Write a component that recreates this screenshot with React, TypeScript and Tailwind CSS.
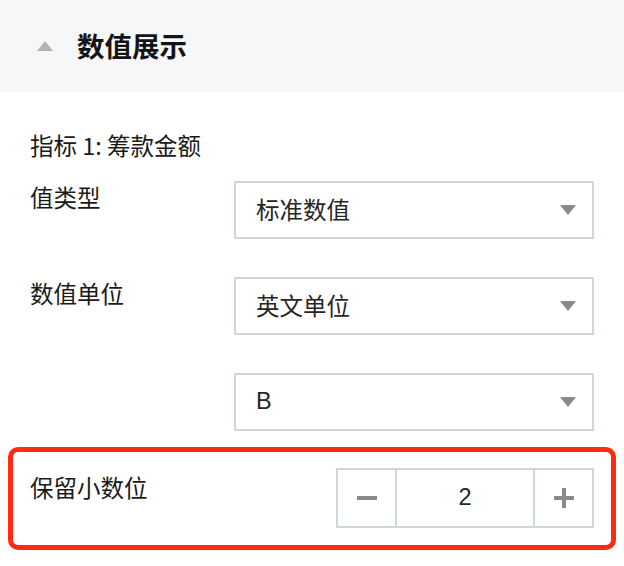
import React from "react";

const font = { fontFamily: '"Noto Sans CJK SC", "Noto Sans", sans-serif' };

function Caret({ up = false, color }: { up?: boolean; color: string }) {
  return (
    <svg width="16" height="10" viewBox="0 0 16 10" className="block">
      {up ? (
        <polygon points="8,0 16,10 0,10" fill={color} />
      ) : (
        <polygon points="0,0 16,0 8,10" fill={color} />
      )}
    </svg>
  );
}

function Select({ value, latin = false }: { value: string; latin?: boolean }) {
  return (
    <div className="flex h-[58px] w-[360px] items-center justify-between border-2 border-[#d0d6e0] bg-white pl-[20px] pr-[16px]">
      <span
        className="text-[23.5px] leading-none text-[#262626]"
        style={latin ? { fontFamily: '"Liberation Sans", "Noto Sans CJK SC", sans-serif' } : undefined}
      >
        {value}
      </span>
      <Caret color="#8a8a8a" />
    </div>
  );
}

export default function App() {
  return (
    <div className="min-h-[566px] w-[624px] bg-white text-[#1a1a1a]" style={font}>
      <div className="flex h-[92px] items-center bg-[#f6f7f9] pl-[37px]">
        <Caret up color="#b3b3b3" />
        <span className="ml-[24px] text-[27.5px] font-semibold leading-none text-[#141414]">数值展示</span>
      </div>
      <div className="px-[30px] pt-[37px]">
        <div className="text-[23.5px] leading-[33px]">指标 1: 筹款金额</div>
        <div className="mt-[19px] flex items-start">
          <div className="w-[204px] text-[23.5px] leading-[33px]">值类型</div>
          <Select value="标准数值" />
        </div>
        <div className="mt-[38px] flex items-start">
          <div className="w-[204px] text-[23.5px] leading-[33px]">数值单位</div>
          <Select value="英文单位" />
        </div>
        <div className="mt-[38px] flex items-start">
          <div className="w-[204px]" />
          <Select value="B" latin />
        </div>
      </div>
      <div className="mx-[8px] mt-[16px] flex items-start justify-between rounded-[10px] border-[5px] border-[#ff2a0f] px-[17px] pb-[17px] pt-[16px]">
        <div className="pt-[3px] text-[23.5px] leading-[33px]">保留小数位</div>
        <div className="flex h-[60px] w-[258px] border-2 border-[#d0d6e0]">
          <div className="flex w-[59px] items-center justify-center border-r-2 border-[#d0d6e0]">
            <div className="h-[4px] w-[20px] bg-[#8a8a8a]" />
          </div>
          <div
            className="flex flex-1 items-center justify-center text-[23.5px] text-[#262626]"
            style={{ fontFamily: '"Liberation Sans", sans-serif' }}
          >
            2
          </div>
          <div className="relative flex w-[59px] items-center justify-center border-l-2 border-[#d0d6e0]">
            <div className="relative h-[20px] w-[20px]">
              <div className="absolute left-0 top-[8px] h-[4px] w-[20px] bg-[#8a8a8a]" />
              <div className="absolute left-[8px] top-0 h-[20px] w-[4px] bg-[#8a8a8a]" />
            </div>
          </div>
        </div>
      </div>
    </div>
  );
}
